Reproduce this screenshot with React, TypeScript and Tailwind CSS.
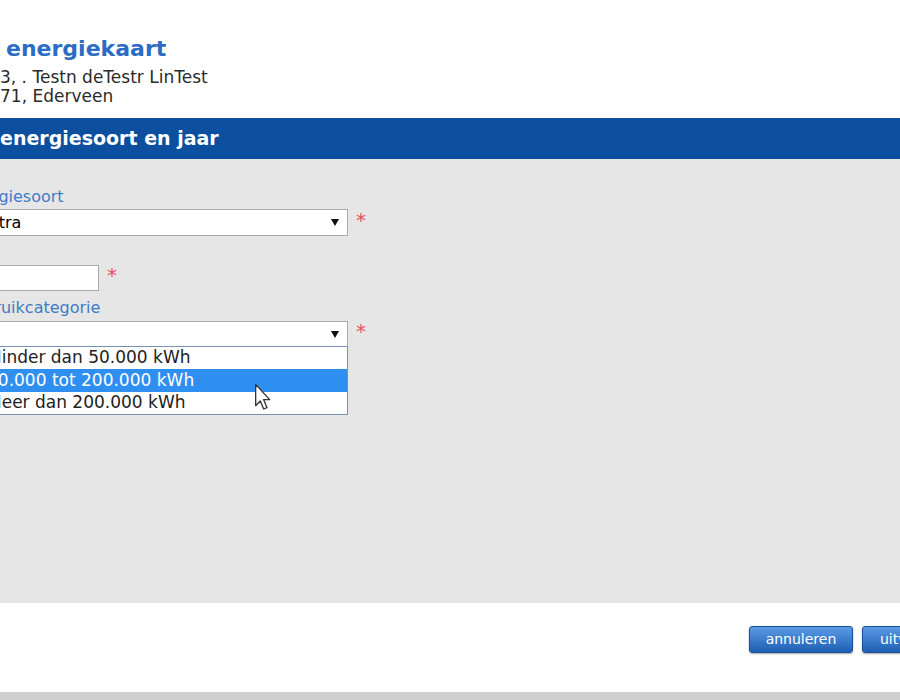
export default function App() {
  return (
    <div className="relative w-[900px] h-[700px] overflow-hidden bg-white text-[#333] font-['DejaVu_Sans',Verdana,sans-serif]">
      {/* kop met titel en adres */}
      <div className="h-[118px] pt-[36px]">
        <h1 className="ml-[6px] text-[22px] leading-[26px] font-bold text-[#2b6cc4]">energiekaart</h1>
        <div className="mt-[6px] text-[17px] leading-[19px] text-[#2a2a2a]">
          <p>3, . Testn deTestr LinTest</p>
          <p>71, Ederveen</p>
        </div>
      </div>

      {/* blauwe balk */}
      <div className="h-[41px] bg-[#0b4f9e] flex items-center">
        <h2 className="text-[19px] font-bold text-white">energiesoort en jaar</h2>
      </div>

      {/* formulier */}
      <div className="relative h-[444px] bg-[#e6e6e6] pt-[28px]">
        <div className="relative -ml-[38px] flex flex-col items-start">
          <label className="text-[16px] leading-[20px] text-[#3f7cc5]">Energiesoort</label>
          <div className="mt-[2px] flex items-center">
            <div className="w-[386px] h-[27px] bg-white border border-[#a9a9a9] flex items-center justify-between pl-[2px] pr-[8px] text-[16px] text-black">
              <span>Elektra</span>
              <Arrow />
            </div>
            <Required />
          </div>

          <label className="mt-[8px] text-[16px] leading-[20px] text-[#3f7cc5]">Jaar</label>
          <div className="mt-[1px] flex items-center">
            <div className="w-[137px] h-[26px] bg-white border border-[#a9a9a9]" />
            <Required />
          </div>

          <label className="mt-[7px] text-[16px] leading-[20px] text-[#3f7cc5]">Gebruikcategorie</label>
          <div className="relative mt-[3px] flex items-center">
            <div className="w-[386px] h-[26px] bg-white border border-[#a9a9a9] flex items-center justify-end pr-[8px]">
              <Arrow />
            </div>
            <Required />

            {/* open keuzelijst */}
            <div className="absolute left-0 top-[25px] w-[386px] bg-white border border-[#7891b3] text-[17px] text-[#222] z-10">
              <div className="h-[22px] flex items-center pl-[24px]">Minder dan 50.000 kWh</div>
              <div className="h-[23px] flex items-center pl-[24px] bg-[#2f8ff0] text-white">50.000 tot 200.000 kWh</div>
              <div className="h-[22px] flex items-center pl-[24px]">Meer dan 200.000 kWh</div>
            </div>
          </div>
        </div>
      </div>

      {/* voettekst met knoppen */}
      <div className="h-[89px] bg-white pt-[23px] flex gap-[9px] pl-[749px]">
        <button className="shrink-0 w-[104px] h-[27px] rounded-[3px] bg-gradient-to-b from-[#5a9be6] to-[#1f5fb3] border border-[#1b4f96] shadow-[0_1px_2px_rgba(0,0,0,0.35)] text-white text-[14px]">
          annuleren
        </button>
        <button className="shrink-0 w-[104px] h-[27px] rounded-[3px] bg-gradient-to-b from-[#5a9be6] to-[#1f5fb3] border border-[#1b4f96] shadow-[0_1px_2px_rgba(0,0,0,0.35)] text-white text-[14px] text-left pl-[17px]">
          uitvoeren
        </button>
      </div>
      <div className="h-[8px] bg-[#cfcfcf]" />

      {/* muisaanwijzer */}
      <svg className="absolute left-[254px] top-[383px] z-20" width="18" height="28" viewBox="0 0 13 21">
        <path d="M1 1 L1 17 L4.5 13.5 L7 19.5 L9.5 18.5 L7 12.5 L11.5 12.5 Z" fill="white" stroke="#333" strokeWidth="1" strokeLinejoin="round" />
      </svg>
    </div>
  );
}

function Arrow() {
  return (
    <svg width="8" height="7" viewBox="0 0 8 7">
      <path d="M0 0 L8 0 L4 7 Z" fill="#111" />
    </svg>
  );
}

function Required() {
  return <span className="ml-[8px] text-[20px] leading-none text-[#e5505a] -mt-[6px]">*</span>;
}
